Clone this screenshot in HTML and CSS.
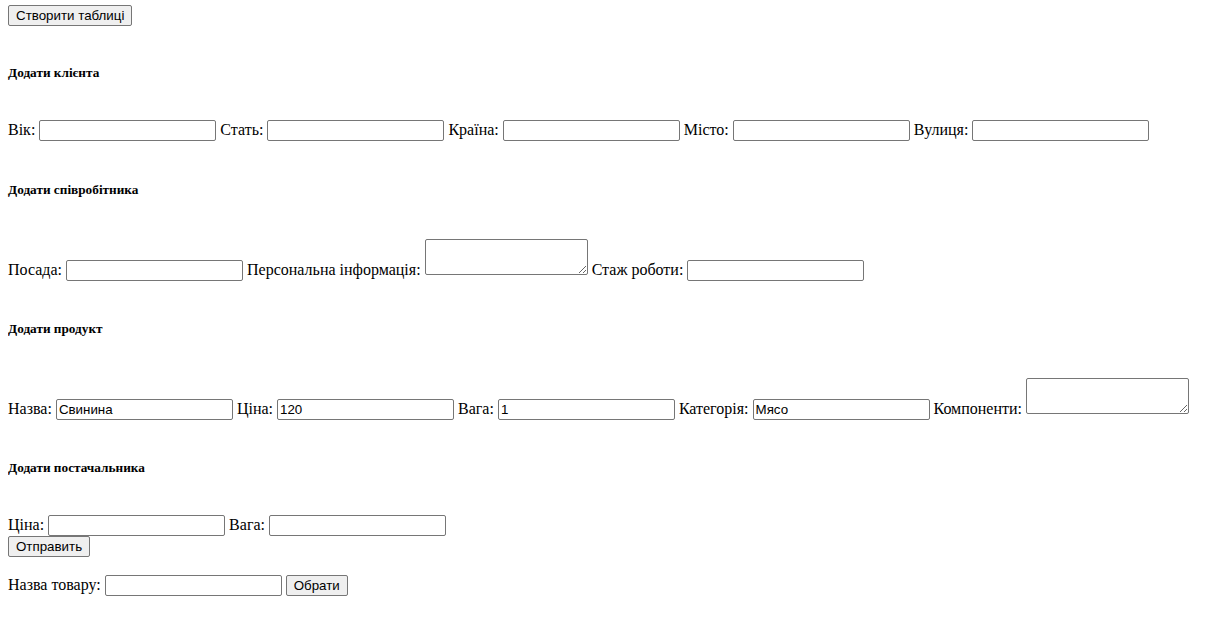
FILE: index.html
```html
<!DOCTYPE html>
<html lang="uk">
<head>
<meta charset="utf-8">
<title>Форма</title>
<link rel="stylesheet" href="styles.css">
</head>
<body class="page">
<div class="top"><button class="btn" type="button">Створити таблиці</button></div>

<h5 class="heading first">Додати клієнта</h5>
<div class="row">Вік: <input class="field" type="text"> Стать: <input class="field" type="text"> Країна: <input class="field" type="text"> Місто: <input class="field" type="text"> Вулиця: <input class="field" type="text"></div>

<h5 class="heading">Додати співробітника</h5>
<div class="row tall">Посада: <input class="field" type="text"> Персональна інформація: <span class="area-wrap"><textarea class="area"></textarea></span> Стаж роботи: <input class="field" type="text"></div>

<h5 class="heading">Додати продукт</h5>
<div class="row tall">Назва: <input class="field" type="text" value="Свинина"> Ціна: <input class="field" type="text" value="120"> Вага: <input class="field" type="text" value="1"> Категорія: <input class="field" type="text" value="Мясо"> Компоненти: <span class="area-wrap"><textarea class="area"></textarea></span></div>

<h5 class="heading">Додати постачальника</h5>
<div class="row">Ціна: <input class="field" type="text"> Вага: <input class="field" type="text"></div>
<div class="row"><button class="btn" type="button">Отправить</button></div>
<div class="row last">Назва товару: <input class="field" type="text"> <button class="btn" type="button">Обрати</button></div>
</body>
</html>
```
FILE: styles.css
```css
.page {
  margin: 4px 8px 8px;
  font-family: "Liberation Serif", "Times New Roman", serif;
  font-size: 16px;
  color: #000;
  background: #fff;
}

.top {
  line-height: 21px;
}

.heading {
  font-size: 13.28px;
  font-weight: bold;
  line-height: 15px;
  margin: 41px 0 40px;
}

.heading.first {
  margin-top: 39px;
}

.row {
  margin: 0;
}

.row.tall {
  padding-top: 2px;
  margin-bottom: -1px;
}

.row.last {
  margin-top: 18px;
}

.field,
.area,
.btn {
  font-family: "Liberation Sans", Arial, sans-serif;
  font-size: 13.333px;
  color: #000;
  box-sizing: border-box;
  margin: 0;
}

.field {
  width: 177px;
  height: 21px;
  padding: 1px 2px;
  border: 1px solid #767676;
  border-radius: 2px;
  background: #fff;
}

.area-wrap {
  display: inline-block;
  vertical-align: baseline;
  margin-bottom: 1px;
}

.area {
  display: block;
  width: 163px;
  height: 36px;
  padding: 2px;
  border: 1px solid #767676;
  border-radius: 2px;
  background: #fff;
  resize: both;
}

.btn {
  height: 21px;
  padding: 1px 7px;
  border: 1px solid #767676;
  border-radius: 2px;
  background: #efefef;
}
```
